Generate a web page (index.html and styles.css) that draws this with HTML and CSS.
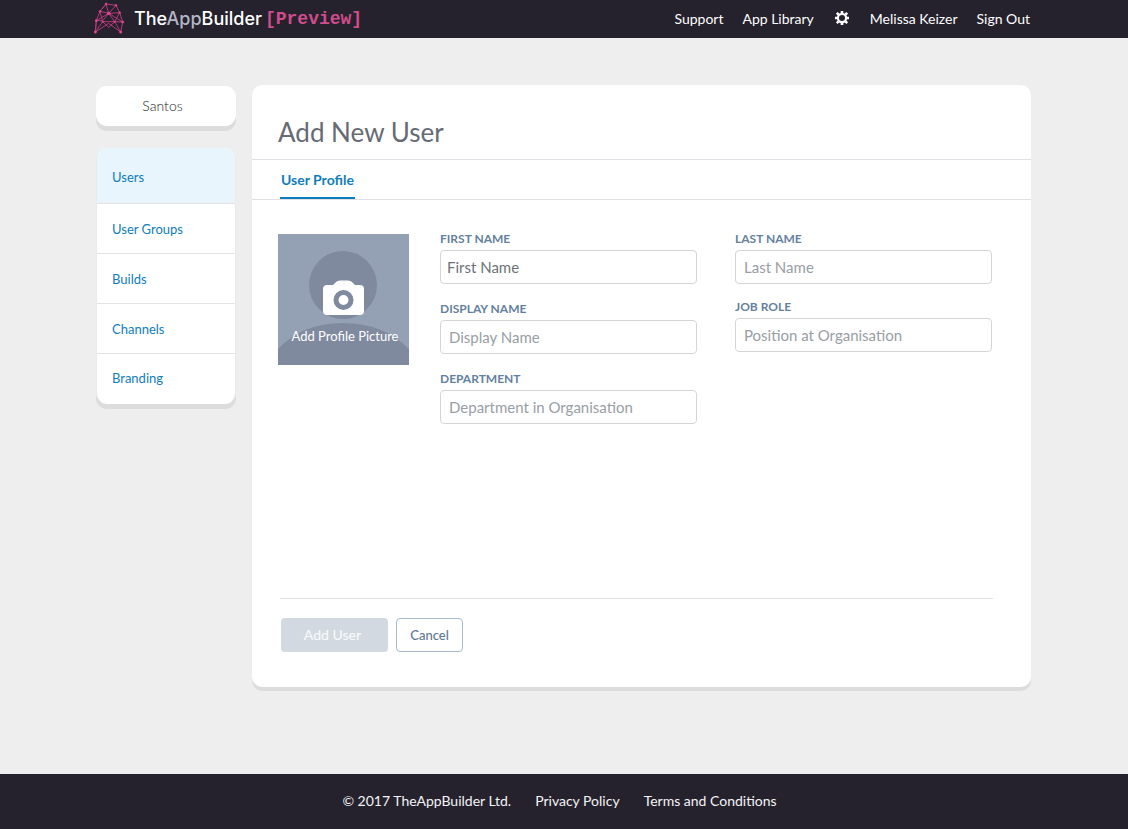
FILE: index.html
```html
<!DOCTYPE html>
<html lang="en">
<head>
<meta charset="utf-8">
<title>Add New User</title>
<link rel="stylesheet" href="styles.css">
</head>
<body>
<header class="topbar">
  <a class="brand" href="#">
    <svg class="brand-mark" viewBox="30 6 90 96" aria-hidden="true">
      <path class="mesh" d="M66 12L96 16L107 38L116 66L110 96L92 65L74 82L56 65L34 96L37 62L48 34ZM66 12L74 40L96 16M48 34L74 40L107 38M37 62L74 40L116 66M37 62H56L74 40L92 65L116 66M48 34L56 65M107 38L92 65M34 96L74 70L110 96M37 62L34 96M66 12L48 34M56 65H92"/>
      <g class="nodes"><circle cx="66" cy="12" r="3.5"/><circle cx="96" cy="16" r="3.5"/><circle cx="48" cy="34" r="3.5"/><circle cx="74" cy="40" r="5"/><circle cx="107" cy="38" r="3.5"/><circle cx="37" cy="62" r="4"/><circle cx="116" cy="66" r="4"/><circle cx="56" cy="65" r="3"/><circle cx="92" cy="65" r="3"/><circle cx="34" cy="96" r="4.5"/><circle cx="110" cy="96" r="4.5"/></g>
    </svg>
    <span class="brand-name">The<span class="brand-app">App</span>Builder</span>
    <span class="brand-tag">[Preview]</span>
  </a>
  <nav class="topnav" aria-label="Account">
    <a href="#">Support</a>
    <a href="#">App Library</a>
    <a class="settings" href="#" aria-label="Settings">
      <svg viewBox="-7 -7 14 14" aria-hidden="true">
        <circle r="4.1" fill="none" stroke="currentColor" stroke-width="2.2"/>
        <path d="M0-4.8V-7M0 4.8V7M-4.8 0H-7M4.8 0H7M3.4-3.4L5.200-5.200M-3.4 3.4L-5.200 5.200M3.4 3.4L5.200 5.200M-3.4-3.4L-5.200-5.200" fill="none" stroke="currentColor" stroke-width="2.6"/>
      </svg>
    </a>
    <a href="#">Melissa Keizer</a>
    <a href="#">Sign Out</a>
  </nav>
</header>

<div class="page">
  <aside class="sidebar">
    <button class="account" type="button">Santos</button>
    <nav class="menu" aria-label="Sections">
      <a class="active" href="#">Users</a>
      <a href="#">User Groups</a>
      <a href="#">Builds</a>
      <a href="#">Channels</a>
      <a href="#">Branding</a>
    </nav>
  </aside>

  <main class="card">
    <h1 class="title">Add New User</h1>
    <nav class="tabs" aria-label="User sections"><a class="tab" href="#">User Profile</a></nav>
    <form class="form">
      <div class="profile">
        <button class="picture" type="button">
          <svg viewBox="0 0 131 131" aria-hidden="true">
            <circle class="shade" cx="65" cy="51" r="34"/>
            <path class="shade" d="M0 115Q25 89 65 89T131 115V131H0Z"/>
            <path fill="#fff" d="M49 51H55L58 48Q59.500 46.500 62 46.500H70Q72.500 46.500 74 48L77 51H82Q86 51 86 55V77Q86 81 82 81H49Q45 81 45 77V55Q45 51 49 51Z"/>
            <circle class="lens" cx="65.500" cy="66" r="7.500"/>
          </svg>
          <span class="picture-label">Add Profile Picture</span>
        </button>
        <div class="column">
          <div class="field"><label for="first">FIRST NAME</label><input class="filled" id="first" type="text" placeholder="First Name"></div>
          <div class="field"><label for="display">DISPLAY NAME</label><input id="display" type="text" placeholder="Display Name"></div>
          <div class="field"><label for="department">DEPARTMENT</label><input id="department" type="text" placeholder="Department in Organisation"></div>
        </div>
        <div class="column column-tight">
          <div class="field"><label for="last">LAST NAME</label><input id="last" type="text" placeholder="Last Name"></div>
          <div class="field"><label for="role">JOB ROLE</label><input id="role" type="text" placeholder="Position at Organisation"></div>
        </div>
      </div>
      <div class="actions">
        <button class="button primary" type="submit" disabled>Add User</button>
        <button class="button secondary" type="button">Cancel</button>
      </div>
    </form>
  </main>
</div>

<footer class="footer">
  <span>© 2017 TheAppBuilder Ltd.</span>
  <a href="#">Privacy Policy</a>
  <a href="#">Terms and Conditions</a>
</footer>
</body>
</html>
```
FILE: styles.css
```css
* { box-sizing: border-box; }

body {
  margin: 0;
  min-height: 100vh;
  display: flex;
  flex-direction: column;
  background: #eee;
  font-family: Lato, "Liberation Sans", sans-serif;
  font-size: 13px;
}

a { color: inherit; text-decoration: none; }
button, input { font-family: inherit; }

.topbar {
  display: flex;
  align-items: center;
  justify-content: space-between;
  height: 38px;
  padding: 0 98px 2px 94px;
  background: #25222d;
  color: #fff;
}
.brand { display: flex; align-items: center; }
.brand-mark { width: 30px; height: 32px; margin-right: 10px; }
.mesh { fill: none; stroke: #b5377a; stroke-width: 3; }
.nodes { fill: #dd4a92; }
.brand-name { padding-top: 2px; font: 500 18px/24px Inter, sans-serif; }
.brand-app { color: #b4b7c6; }
.brand-tag {
  margin-left: 3px;
  padding-top: 2px;
  color: #d04c8c;
  font: bold 18px/24px "Liberation Mono", monospace;
}
.topnav { display: flex; align-items: center; gap: 19px; font-size: 14px; }
.settings { display: flex; margin: 0 2px; }
.settings svg { width: 14px; height: 14px; }

.page {
  flex: 1;
  display: flex;
  align-items: flex-start;
  gap: 16px;
  padding: 47px 97px 48px 96px;
}
.sidebar { width: 140px; flex: none; padding-top: 1px; }
.account {
  display: block;
  width: 100%;
  height: 40px;
  margin-bottom: 22px;
  padding: 0 7px 2px 0;
  border: 0;
  border-radius: 11px;
  background: #fff;
  box-shadow: 0 5px #dcdcdc;
  color: #222;
  font-size: 14px;
  font-weight: 300;
}
.menu {
  overflow: hidden;
  border: 1px solid #eaeaea;
  border-width: 0 1px;
  border-radius: 11px;
  background: #fff;
  box-shadow: 0 5px #dcdcdc;
  color: #0f7dbd;
}
.menu a {
  display: flex;
  align-items: center;
  height: 50px;
  padding: 0 15px;
  border-bottom: 1px solid #e4e4e6;
}
.menu a:last-child { border-bottom: 0; padding-bottom: 2px; }
.menu .active { height: 56px; padding-top: 2px; background: #e9f5fc; }

.card {
  flex: 1;
  min-width: 0;
  min-height: 602px;
  display: flex;
  flex-direction: column;
  border-radius: 10px;
  background: #fff;
  box-shadow: 0 4px #dcdcdc;
}
.title {
  margin: 0;
  padding: 30px 26px 10px;
  border-bottom: 1px solid #e0e0e6;
  color: #666b73;
  font-size: 26px;
  font-weight: 400;
  line-height: 34px;
}
.tabs {
  display: flex;
  height: 40px;
  padding: 0 28px;
  border-bottom: 1px solid #e0e0e4;
}
.tab {
  padding: 0 1px;
  border-bottom: 2px solid #0f7dbd;
  color: #0f7dbd;
  font-size: 14px;
  font-weight: 700;
  line-height: 39px;
}
.form { flex: 1; display: flex; flex-direction: column; padding: 32px 38px 35px 26px; }
.profile { flex: 1; display: flex; align-items: flex-start; padding-right: 1px; }
.picture {
  position: relative;
  flex: none;
  width: 131px;
  height: 131px;
  margin: 2px 31px 0 0;
  padding: 0;
  border: 0;
  background: #94a0b4;
}
.picture svg { display: block; }
.picture-label {
  position: absolute;
  inset: 93px 0 auto 3px;
  color: #fff;
  font-size: 13px;
  line-height: 18px;
  text-align: center;
}
.shade { fill: #7f8a9f; }
.lens { fill: #fff; stroke: #7f8a9f; stroke-width: 5; }

.column { flex: 1; min-width: 0; display: flex; flex-direction: column; gap: 18px; }
.column + .column { margin-left: 38px; }
.column-tight { gap: 16px; }
.field label {
  display: block;
  height: 18px;
  color: #647f9f;
  font-size: 12px;
  font-weight: 700;
  line-height: 14px;
}
.field input {
  display: block;
  width: 100%;
  height: 34px;
  padding: 0 8px;
  border: 1px solid #d4d5d8;
  border-radius: 4px;
  background: #fff;
  color: #6d7278;
  font-size: 15px;
}
.field input::placeholder { color: #999ea5; opacity: 1; }
.field .filled { padding: 0 6px; }
.field .filled::placeholder { color: #6d7278; }

.actions {
  display: flex;
  gap: 8px;
  margin-left: 2px;
  padding: 19px 1px 0;
  border-top: 1px solid #dfe0e2;
}
.button { height: 34px; border-radius: 4px; font-size: 13px; }
.primary {
  width: 107px;
  padding: 0 4px 1px 0;
  border: 0;
  background: #d2d9e1;
  color: #f7f9fa;
  font-size: 14px;
  font-weight: 500;
}
.secondary {
  width: 67px;
  padding: 0;
  border: 1px solid #a9b9cd;
  background: #fff;
  color: #5d7795;
  font-weight: 500;
}

.footer {
  display: flex;
  align-items: center;
  justify-content: center;
  gap: 24px;
  height: 55px;
  padding: 0 9px 2px 0;
  background: #25222d;
  color: #f4f4f6;
  font-size: 14px;
}
```
